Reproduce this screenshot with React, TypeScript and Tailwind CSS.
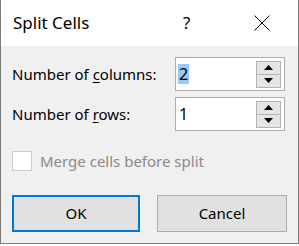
import React from "react";

const font = { fontFamily: '"Noto Sans", "Liberation Sans", sans-serif' };

function Spinner() {
    return (
        <div className="w-[25px] h-[27px] flex flex-col border border-[#b4b4b4]">
            <div className="flex-1 bg-[#e5e5e5] border-b border-[#b4b4b4] flex items-center justify-center">
                <svg width="9" height="5" viewBox="0 0 9 5"><path d="M0 5 L4.5 0 L9 5 Z" fill="#000" /></svg>
            </div>
            <div className="flex-1 bg-[#e5e5e5] flex items-center justify-center">
                <svg width="9" height="5" viewBox="0 0 9 5"><path d="M0 0 L4.5 5 L9 0 Z" fill="#000" /></svg>
            </div>
        </div>
    );
}

function NumberRow({ label, accessKey, rest, value, selected }: { label: string; accessKey: string; rest: string; value: string; selected?: boolean }) {
    return (
        <div className="flex items-center h-[34px]">
            <div className="w-[163px] text-[15px] text-black">
                {label}<span className="underline underline-offset-2">{accessKey}</span>{rest}
            </div>
            <div className="w-[110px] h-[34px] bg-white border border-[#adadad] flex items-center justify-between pl-[2px] pr-[3px]">
                <span className={`text-[16px] leading-[20px] px-[1px] text-black ${selected ? "bg-[#99c9ef]" : ""}`}>{value}</span>
                <Spinner />
            </div>
        </div>
    );
}

export default function App() {
    return (
        <div className="w-[299px] h-[246px] bg-white" style={font}>
            <div className="w-[299px] h-[244px] flex flex-col border-x border-b border-[#7a7a7a]">
                <div className="h-[46px] bg-white flex items-center pl-[12px] shrink-0">
                    <span className="text-[17px] text-black w-[170px]">Split Cells</span>
                    <span className="text-[17px] text-black w-[71px]">?</span>
                    <svg width="16" height="16" viewBox="0 0 16 16">
                        <path d="M0.5 0.5 L15.5 15.5 M15.5 0.5 L0.5 15.5" stroke="#000" strokeWidth="1" />
                    </svg>
                </div>
                <div className="flex-1 bg-[#f0f0f0] pl-[11px] pt-[11px] flex flex-col">
                    <div className="flex flex-col gap-[6px]">
                        <NumberRow label="Number of " accessKey="c" rest="olumns:" value="2" selected />
                        <NumberRow label="Number of " accessKey="r" rest="ows:" value="1" />
                    </div>
                    <div className="flex items-center gap-[8px] mt-[20px] h-[20px]">
                        <div className="w-[20px] h-[20px] bg-white border border-[#cccccc]" />
                        <span className="text-[15px] text-[#8a8a8a]">Merge cells before split</span>
                    </div>
                    <div className="flex gap-[17px] mt-[24px]">
                        <button className="w-[128px] h-[37px] bg-[#e1e1e1] border-2 border-[#0078d7] text-[15px] text-black">OK</button>
                        <button className="w-[130px] h-[37px] bg-[#e1e1e1] border border-[#adadad] text-[15px] text-black">Cancel</button>
                    </div>
                </div>
            </div>
        </div>
    );
}
